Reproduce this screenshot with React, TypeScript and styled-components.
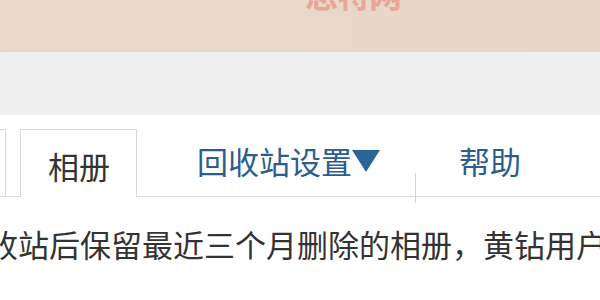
import styled, {createGlobalStyle} from 'styled-components';

const GlobalStyle = createGlobalStyle`
  html, body {
    margin: 0;
    padding: 0;
    background: #ffffff;
  }
  body {
    font-family: "Noto Sans CJK SC", "Noto Sans", sans-serif;
    width: 600px;
    height: 300px;
    overflow: hidden;
  }
`

const Page = styled.div`
  display: flex;
  flex-direction: column;
  width: 600px;
  height: 300px;
  overflow: hidden;
`

const Banner = styled.div`
  height: 50px;
  background: linear-gradient(90deg, #ead9c6 0%, #e8d8c8 50%, #e8d7c8 100%);
  border-bottom: 2px solid #e3d6cc;
  overflow: hidden;
  padding-left: 305px;
`

const BannerTitle = styled.div`
  font-size: 33px;
  font-weight: 700;
  line-height: 1;
  color: #eba597;
  margin-top: -22px;
  letter-spacing: -1px;
`

const GreyBand = styled.div`
  height: 63px;
  background: #efefef;
`

const TabBar = styled.div`
  display: flex;
  align-items: stretch;
  margin-top: 14px;
  height: 67px;
  border-bottom: 1px solid #dadada;
`

interface TabProps {
    $active?: boolean;
    $gap?: number;
}

const Tab = styled.div<TabProps>`
  display: flex;
  align-items: center;
  box-sizing: border-box;
  font-size: 31px;
  line-height: 1;
  white-space: nowrap;
  color: ${p => p.$active ? '#333333' : '#2b5d8e'};
  background: #ffffff;
  border: 1px solid ${p => p.$active ? '#d8d8d8' : 'transparent'};
  border-bottom: none;
  margin-left: ${p => p.$gap ?? 0}px;
  margin-bottom: ${p => p.$active ? '-1px' : '0'};
  padding: ${p => p.$active ? '3px 26px 0 27px' : '0 0 6px 0'};
`

const StubTab = styled.div`
  width: 40px;
  margin-left: -36px;
  border: 1px solid #d8d8d8;
  border-bottom: none;
  margin-right: 14px;
`

const Caret = styled.span`
  display: inline-block;
  width: 0;
  height: 0;
  margin-left: 0;
  margin-top: 2px;
  border-left: 14px solid transparent;
  border-right: 14px solid transparent;
  border-top: 22px solid #2a6597;
`

const Separator = styled.div<{ $gap: number }>`
  align-self: flex-end;
  width: 1px;
  height: 30px;
  margin-left: ${p => p.$gap}px;
  margin-bottom: -7px;
  background: #d6d6d6;
`

const Notice = styled.p`
  margin: 25px 0 0 -13px;
  font-size: 31px;
  line-height: 44px;
  color: #333333;
  white-space: nowrap;
`

const App = () => {
    return (
        <Page>
            <GlobalStyle/>
            <Banner>
                <BannerTitle>思特网</BannerTitle>
            </Banner>
            <GreyBand/>
            <TabBar>
                <StubTab/>
                <Tab $active>相册</Tab>
                <Tab $gap={59}>回收站设置<Caret/></Tab>
                <Separator $gap={34}/>
                <Tab $gap={42}>帮助</Tab>
            </TabBar>
            <Notice>收站后保留最近三个月删除的相册，黄钻用户可保留更久</Notice>
        </Page>
    )
}

export default App
